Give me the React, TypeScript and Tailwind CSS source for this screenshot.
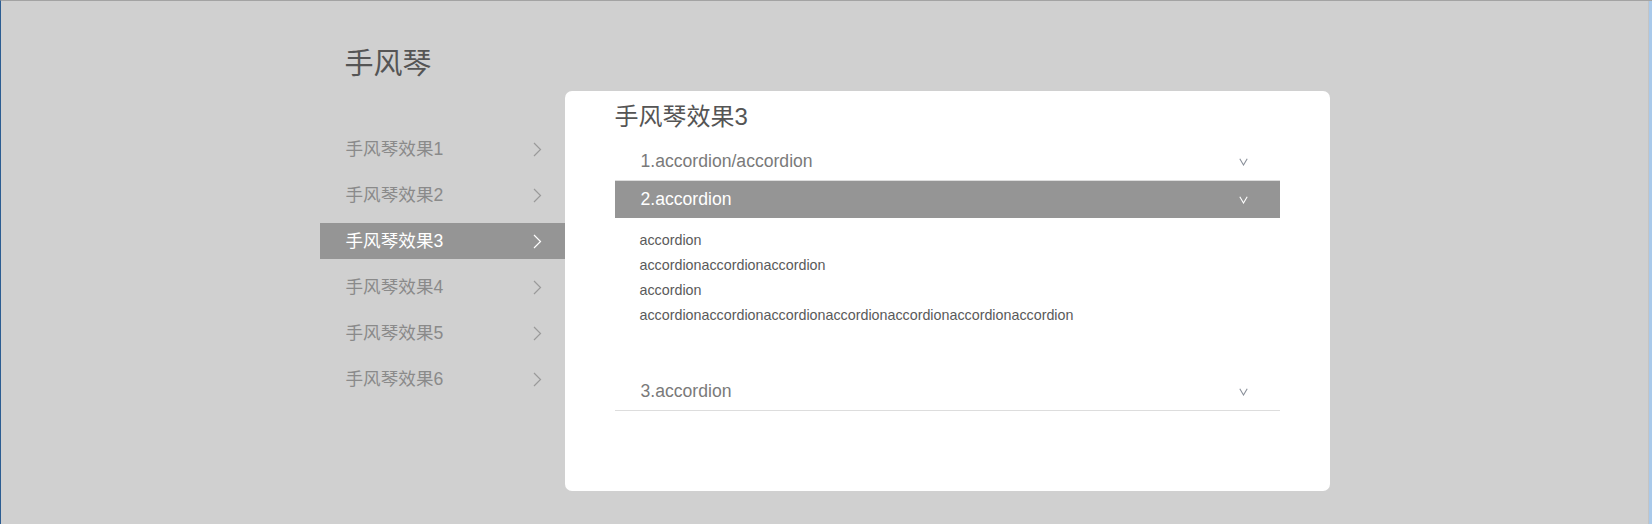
import React from "react";

const FONT = { fontFamily: '"Liberation Sans", Arial, "Noto Sans CJK SC", sans-serif' };

function Chevron({ active }: { active: boolean }) {
  return (
    <svg width="9" height="15" viewBox="0 0 9 15" className="block">
      <polyline
        points="1,1 7.5,7.5 1,14"
        fill="none"
        stroke={active ? "#ffffff" : "#9a9a9a"}
        strokeWidth="1.2"
      />
    </svg>
  );
}

function Down({ color }: { color: string }) {
  return (
    <svg width="9" height="8" viewBox="0 0 9 8" className="block">
      <polyline points="0.8,0.8 4.5,7 8.2,0.8" fill="none" stroke={color} strokeWidth="1.1" />
    </svg>
  );
}

const items = ["手风琴效果1", "手风琴效果2", "手风琴效果3", "手风琴效果4", "手风琴效果5", "手风琴效果6"];

export default function App() {
  return (
    <div
      className="w-[1652px] h-[524px] bg-[#d0d0d0] border-t border-t-[#a3a3a3] border-l border-l-[#2c5d92] flex overflow-hidden"
      style={FONT}
    >
      <div className="flex-1 flex justify-center">
        <div className="w-[1010px] shrink-0 flex">
          {/* Sidebar */}
          <div className="w-[245px] shrink-0 flex flex-col">
            <div className="mt-[49px] h-[28px] leading-[28px] pl-[25px] text-[29px] text-[#555555]">手风琴</div>
            <div className="mt-[53px] flex flex-col gap-[10px]">
              {items.map((t, i) => {
                const active = i === 2;
                return (
                  <div
                    key={t}
                    className={
                      "h-[36px] flex items-center justify-between pl-[26px] pr-[23px] text-[17.6px] " +
                      (active ? "bg-[#959595] text-white" : "text-[#8a8a8a]")
                    }
                  >
                    <span>{t}</span>
                    <Chevron active={active} />
                  </div>
                );
              })}
            </div>
          </div>
          {/* Card */}
          <div className="mt-[90px] w-[765px] shrink-0 h-[400px] bg-white rounded-[7px] px-[50px] pt-[8px]">
            <div className="h-[36px] leading-[36px] text-[24px] text-[#555555]">手风琴效果3</div>
            <div className="mt-[8px]">
              <div className="h-[38px] border-b border-[#dddddd] flex items-center justify-between pl-[26px] pr-[32px] text-[17.6px] text-[#7a7a7a]">
                <span>1.accordion/accordion</span>
                <Down color="#8a909a" />
              </div>
              <div className="h-[37px] bg-[#959595] flex items-center justify-between pl-[26px] pr-[32px] text-[17.6px] text-white">
                <span>2.accordion</span>
                <Down color="#ffffff" />
              </div>
              <div className="h-[155px] pt-[10px] pl-[25px] text-[14.3px] leading-[25px] text-[#5a5a5a]">
                <div>accordion</div>
                <div>accordionaccordionaccordion</div>
                <div>accordion</div>
                <div>accordionaccordionaccordionaccordionaccordionaccordionaccordion</div>
              </div>
              <div className="h-[38px] border-b border-[#dddddd] flex items-center justify-between pl-[26px] pr-[32px] text-[17.6px] text-[#7a7a7a]">
                <span>3.accordion</span>
                <Down color="#8a909a" />
              </div>
            </div>
          </div>
        </div>
      </div>
      <div className="w-[1px] bg-[#c4c4c4]" />
      <div className="w-[3px] bg-[#a9c9ea]" />
    </div>
  );
}
